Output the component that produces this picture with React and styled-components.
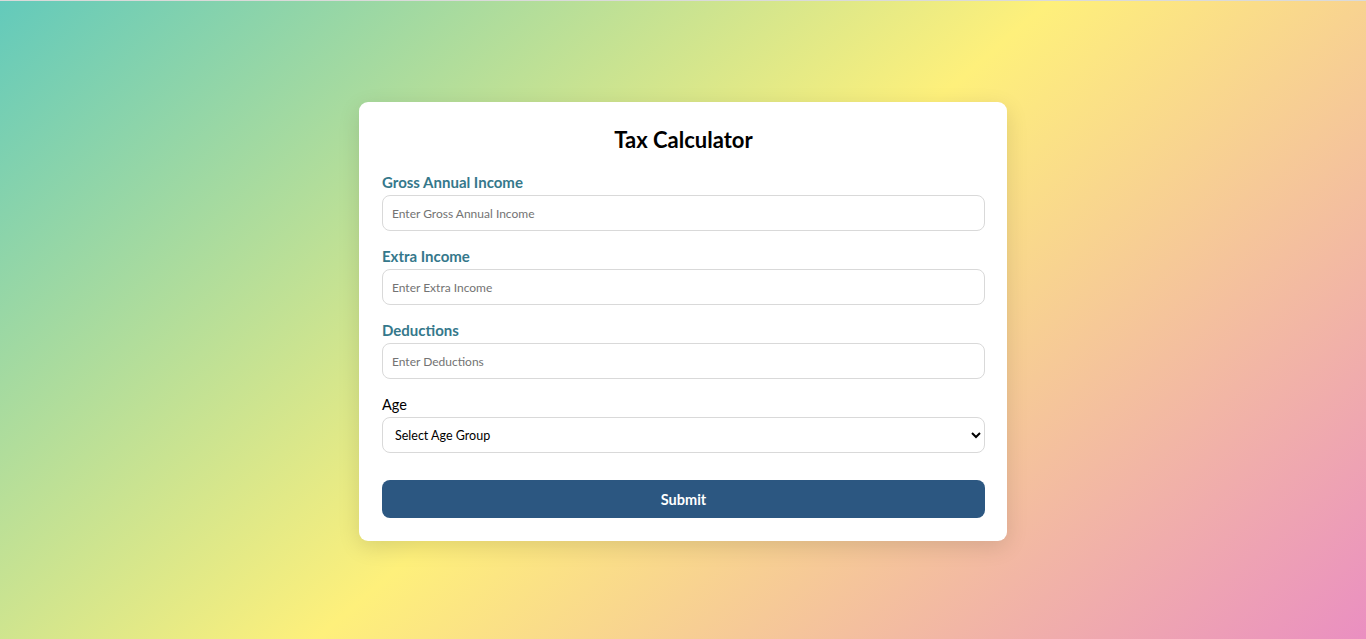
import styled, { createGlobalStyle } from 'styled-components';

const GlobalStyle = createGlobalStyle`
  html, body {
    margin: 0;
    padding: 0;
  }
  body {
    font-family: Lato, "Open Sans", sans-serif;
    border-top: 1px solid #dadada;
  }
`;

const Page = styled.div`
  min-height: 638px;
  display: flex;
  justify-content: center;
  align-items: flex-start;
  padding-top: 101px;
  box-sizing: border-box;
  background: linear-gradient(139deg, #63cabb 0%, #fef07b 50%, #ea8fc1 100%);
`;

const Card = styled.form`
  width: 648px;
  box-sizing: border-box;
  padding: 23px 22px 23px 23px;
  background: #fff;
  border-radius: 9px;
  box-shadow: 0 6px 22px rgba(0, 0, 0, 0.12);
`;

const Title = styled.h2`
  margin: 0 0 18px;
  text-align: center;
  font-size: 22px;
  line-height: 30px;
  font-weight: 700;
  color: #000;
`;

const Field = styled.div`
  display: flex;
  flex-direction: column;
  margin-bottom: 16px;
`;

const Label = styled.label`
  font-size: ${p => (p.$plain ? '14.5px' : '15px')};
  line-height: 19px;
  margin-bottom: 3px;
  font-weight: ${p => (p.$plain ? 400 : 700)};
  color: ${p => (p.$plain ? '#000' : '#35788b')};
`;

const Input = styled.input`
  height: 36px;
  box-sizing: border-box;
  border: 1px solid #d9d9d9;
  border-radius: 8px;
  padding: 0 9px;
  font-family: inherit;
  font-size: 12px;
  outline: none;

  &::placeholder {
    color: #737373;
  }
`;

const Select = styled.select`
  height: 36px;
  box-sizing: border-box;
  border: 1px solid #d9d9d9;
  border-radius: 8px;
  padding: 0 8px;
  font-family: inherit;
  font-size: 12.5px;
  color: #000;
  background: #fff;
  outline: none;
`;

const SubmitButton = styled.button`
  width: 100%;
  height: 38px;
  margin-top: 11px;
  border: none;
  border-radius: 8px;
  background: #2c5781;
  color: #fff;
  font-family: inherit;
  font-size: 14.5px;
  font-weight: 700;
  cursor: pointer;
`;

const fields = [
  { label: 'Gross Annual Income', placeholder: 'Enter Gross Annual Income' },
  { label: 'Extra Income', placeholder: 'Enter Extra Income' },
  { label: 'Deductions', placeholder: 'Enter Deductions' },
];

const App = () => (
  <>
    <GlobalStyle />
    <Page>
      <Card onSubmit={e => e.preventDefault()}>
        <Title>Tax Calculator</Title>
        {fields.map(f => (
          <Field key={f.label}>
            <Label>{f.label}</Label>
            <Input type="text" placeholder={f.placeholder} />
          </Field>
        ))}
        <Field>
          <Label $plain>Age</Label>
          <Select defaultValue="">
            <option value="" disabled>Select Age Group</option>
            <option value="lt40">&lt; 40</option>
            <option value="40to60">≥ 40 &amp; &lt; 60</option>
            <option value="gte60">≥ 60</option>
          </Select>
        </Field>
        <SubmitButton type="submit">Submit</SubmitButton>
      </Card>
    </Page>
  </>
);

export default App;
